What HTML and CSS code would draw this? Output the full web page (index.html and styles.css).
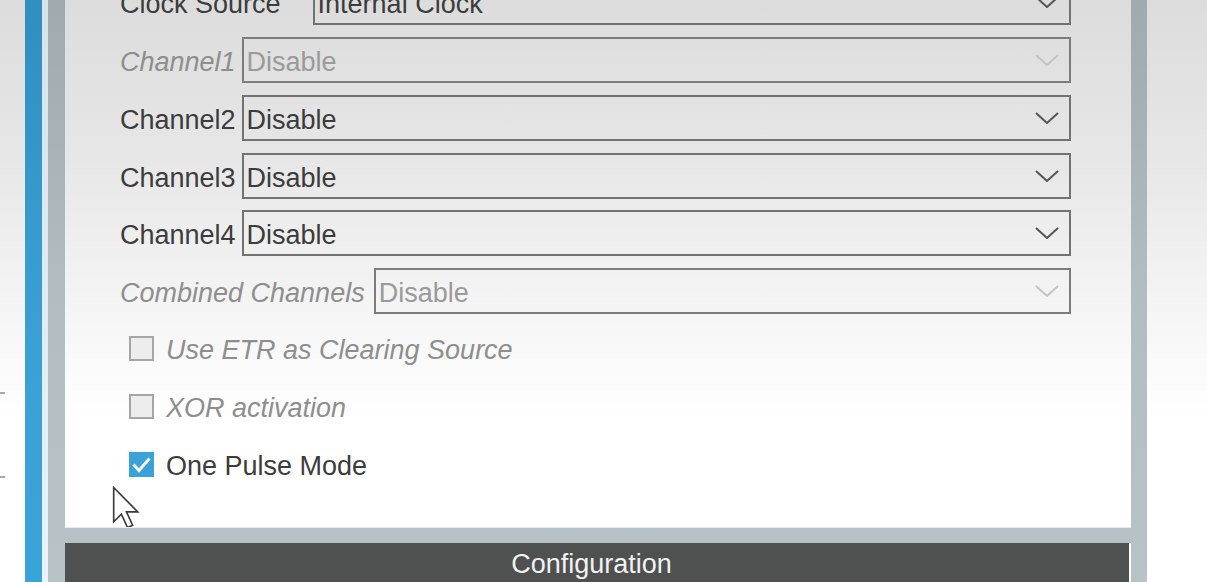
FILE: index.html
```html
<!DOCTYPE html>
<html>
<head>
<meta charset="utf-8">
<link rel="stylesheet" href="styles.css">
</head>
<body>
<div class="screen">
  <div class="gutter">
    <span class="tick"></span>
    <span class="tick"></span>
  </div>
  <div class="bar-blue"></div>
  <div class="bar-light"></div>
  <div class="bar-gray"></div>
  <div class="main">
    <div class="content">
      <div class="rows">
        <div class="row">
          <span class="label label-clock">Clock Source</span>
          <div class="select"><span class="value">Internal Clock</span>
            <svg class="chev" viewBox="0 0 24 12"><polyline points="1,1 12,11 23,1"/></svg>
          </div>
        </div>
        <div class="row disabled">
          <span class="label">Channel1</span>
          <div class="select"><span class="value">Disable</span>
            <svg class="chev" viewBox="0 0 24 12"><polyline points="1,1 12,11 23,1"/></svg>
          </div>
        </div>
        <div class="row">
          <span class="label">Channel2</span>
          <div class="select"><span class="value">Disable</span>
            <svg class="chev" viewBox="0 0 24 12"><polyline points="1,1 12,11 23,1"/></svg>
          </div>
        </div>
        <div class="row">
          <span class="label">Channel3</span>
          <div class="select"><span class="value">Disable</span>
            <svg class="chev" viewBox="0 0 24 12"><polyline points="1,1 12,11 23,1"/></svg>
          </div>
        </div>
        <div class="row">
          <span class="label">Channel4</span>
          <div class="select"><span class="value">Disable</span>
            <svg class="chev" viewBox="0 0 24 12"><polyline points="1,1 12,11 23,1"/></svg>
          </div>
        </div>
        <div class="row disabled">
          <span class="label label-combined">Combined Channels</span>
          <div class="select"><span class="value">Disable</span>
            <svg class="chev" viewBox="0 0 24 12"><polyline points="1,1 12,11 23,1"/></svg>
          </div>
        </div>
        <div class="row check-row disabled">
          <span class="box"></span>
          <span class="check-label">Use ETR as Clearing Source</span>
        </div>
        <div class="row check-row disabled">
          <span class="box"></span>
          <span class="check-label">XOR activation</span>
        </div>
        <div class="row check-row">
          <span class="box checked">
            <svg viewBox="0 0 25 25"><polyline points="4.5,12.5 10,18.5 20.5,6.5"/></svg>
          </span>
          <span class="check-label">One Pulse Mode</span>
        </div>
      </div>
      <svg class="cursor" viewBox="0 0 30 42">
        <path d="M1.5 1.5 L1.5 35 L9 27.5 L15 40.5 L20 38.3 L14 25.3 L25 25.3 Z"/>
      </svg>
    </div>
    <div class="strip"></div>
    <div class="config-bar">Configuration</div>
  </div>
  <div class="bar-gray bar-right"></div>
</div>
</body>
</html>
```

FILE: styles.css
```css
html, body {
  margin: 0;
  padding: 0;
  height: 582px;
  overflow: hidden;
}

body {
  background: linear-gradient(#dcdcdc 0px, #e6e6e6 150px, #f4f4f4 300px, #ffffff 420px);
  font-family: "Liberation Sans", Arial, sans-serif;
}

.screen {
  display: flex;
  height: 582px;
}

.gutter {
  width: 25px;
  display: flex;
  flex-direction: column;
  gap: 82px;
  padding-top: 392px;
  box-sizing: border-box;
}

.tick {
  display: block;
  width: 5px;
  height: 2px;
  background: #a9a9a9;
}

.bar-blue {
  width: 17px;
  background: linear-gradient(#2f8fbf, #3aa1d5 60%, #3aa3d8);
}

.bar-light {
  width: 6px;
  background: linear-gradient(#d4e4ea, #e8f4fa);
}

.bar-gray {
  width: 17px;
  background: linear-gradient(#a0a9ad, #b2bdc1 50%, #b7c3c7);
}

.bar-right {
  width: 16px;
}

.main {
  width: 1066px;
  display: flex;
  flex-direction: column;
}

.content {
  position: relative;
  height: 527px;
  overflow: hidden;
  padding: 0 60px 0 55px;
}

.rows {
  margin-top: -20.75px;
  display: flex;
  flex-direction: column;
  gap: 11.75px;
}

.row {
  height: 46px;
  display: flex;
  align-items: center;
  gap: 6px;
  font-size: 27px;
  color: #3c3c3c;
}

.label {
  white-space: nowrap;
  padding-top: 5px;
}

.label-clock {
  margin-right: 26px;
}

.label-combined {
  margin-right: 3px;
}

.select {
  flex: 1;
  height: 46px;
  box-sizing: border-box;
  border: 2px solid #727272;
  display: flex;
  align-items: center;
  padding-left: 3px;
  padding-right: 10px;
}

.value {
  flex: 1;
  color: #3c3c3c;
  padding-top: 5px;
}

.chev {
  width: 24px;
  height: 12px;
  fill: none;
  stroke: #555;
  stroke-width: 2;
}

.row.disabled .label,
.row.disabled .check-label {
  font-style: italic;
  color: #8e8e8e;
}

.row.disabled .value {
  color: #9a9a9a;
}

.row.disabled .select {
  border-color: #7c7c7c;
}

.row.disabled .chev {
  stroke: #c4c4c4;
}

.check-row {
  padding-left: 9px;
  gap: 12px;
}

.box {
  width: 25px;
  height: 25px;
  box-sizing: border-box;
  border: 2px solid #a6a6a6;
  background: #ededed;
  display: flex;
}

.box.checked {
  border: none;
  background: #3aa2d9;
}

.box svg {
  width: 25px;
  height: 25px;
  fill: none;
  stroke: #ffffff;
  stroke-width: 3;
}

.check-label {
  color: #3c3c3c;
  padding-top: 4px;
}

.cursor {
  position: absolute;
  left: 47px;
  top: 486px;
  width: 31px;
  height: 43px;
  fill: #ffffff;
  stroke: #3a3a3a;
  stroke-width: 1.6;
  stroke-linejoin: miter;
}

.strip {
  height: 16px;
  background: #b5c1c5;
  border-top: 1px solid #e9edee;
  box-sizing: border-box;
}

.config-bar {
  height: 39px;
  background: #4f5150;
  color: #f2f2f2;
  font-size: 27px;
  line-height: 39px;
  padding-top: 2px;
  box-sizing: border-box;
  text-align: center;
  padding-right: 11px;
  margin-right: 2px;
}
```
